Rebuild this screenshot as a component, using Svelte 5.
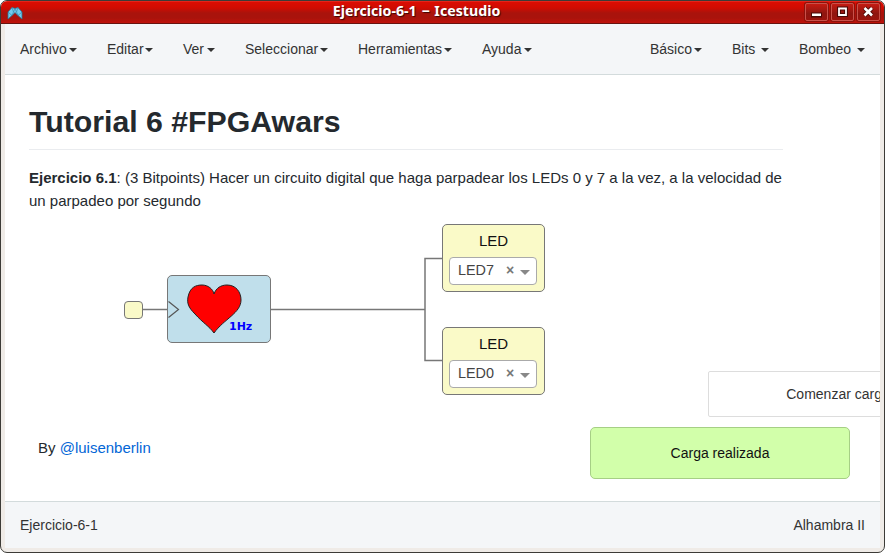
<script>
  const menus = [
    { label: 'Archivo', width: 57 },
    { label: 'Editar', width: 46 },
    { label: 'Ver', width: 32 },
    { label: 'Seleccionar', width: 83 },
    { label: 'Herramientas', width: 94 },
    { label: 'Ayuda', width: 50 }
  ];
  const collections = [
    { label: 'Básico', width: 52 },
    { label: 'Bits', width: 37 },
    { label: 'Bombeo', width: 66 }
  ];
  const leds = [
    { pin: 'LED7', top: 149 },
    { pin: 'LED0', top: 252 }
  ];
</script>

<div class="window">
  <header class="titlebar">
    <svg class="logo" width="16" height="14" viewBox="0 0 16 14">
      <path d="M1 6 5 1.5 8 2.5 11 1.5 15 6v7L11 9.5 8 6.5 5 9.5 1 13z" fill="#72cbed" stroke="#287694" stroke-width=".8" />
      <path d="M1 6l4 3.5L8 2.5l3 7L15 6M5 1.5 6.5 6M11 1.5 9.500 6" fill="none" stroke="#368cae" stroke-width=".7" />
    </svg>
    <h1>Ejercicio-6-1 − Icestudio</h1>
    <div class="controls">
      <button aria-label="Minimizar"><svg width="21" height="16"><path class="edge" d="M5 8.500h11v5H5z" /><path d="M6 9.500h9v2.500H6z" fill="#fff" /></svg></button>
      <button aria-label="Maximizar"><svg width="21" height="16"><path d="M7 4.500h7v6.500H7z" fill="none" stroke="#4c0907" stroke-width="4" /><path d="M7 4.500h7v6.500H7z" fill="none" stroke="#fff" stroke-width="1.8" /></svg></button>
      <button aria-label="Cerrar"><svg width="21" height="16"><path d="m6.500 4 7.500 7.500m0-7.500-7.500 7.500" stroke="#4c0907" stroke-width="4.500" /><path d="m6.500 4 7.500 7.500m0-7.500-7.500 7.500" stroke="#fff" stroke-width="2.600" /></svg></button>
    </div>
  </header>
  <div class="body">
    <nav>
      <div class="group">
        {#each menus as item}
          <span class="menu" style:width="{item.width}px">{item.label}<i class="caret"></i></span>
        {/each}
      </div>
      <div class="group">
        {#each collections as item}
          <span class="menu" style:width="{item.width}px">{item.label}<i class="caret"></i></span>
        {/each}
      </div>
    </nav>
    <main>
      <section class="intro">
        <h2>Tutorial 6 #FPGAwars</h2>
        <p><b>Ejercicio 6.1</b>: (3 Bitpoints) Hacer un circuito digital que haga parpadear los LEDs 0 y 7 a la vez, a la velocidad de<br />un parpadeo por segundo</p>
      </section>
      <svg class="wires" width="875" height="426">
        <path d="M137 234.500h27M265 234.500h155M438 183.500h-18v102h18" fill="none" stroke="#777" stroke-width="1.500" />
      </svg>
      <div class="port"></div>
      <div class="heart">
        <svg width="104" height="69" viewBox="0 0 104 69">
          <path d="m1.500 26.500 10 8-10 8" fill="none" stroke="#555" stroke-width="1.200" />
          <path d="M47 58C42 51 36 48 28 39C21 32 20 28 21 22C23 12 29 10 35 10C41 10 46 14 47 19C49 13 54 10 60 10C69 10 74 17 74 25C74 38 57 44 47 58Z" fill="#f00" stroke="#222" stroke-width="1" />
        </svg>
        <b>1Hz</b>
      </div>
      {#each leds as led}
        <div class="led" style:top="{led.top}px">
          <span>LED</span>
          <div class="select">
            <span>{led.pin}</span><b>×</b><i></i>
          </div>
        </div>
      {/each}
      <p class="author">By <a href="#author">@luisenberlin</a></p>
      <div class="toast pending">Comenzar carga</div>
      <div class="toast done">Carga realizada</div>
    </main>
    <footer><span>Ejercicio-6-1</span><span>Alhambra II</span></footer>
  </div>
</div>

<style>
  :global(body) { margin: 0; background: #fff; overflow: hidden; }
  * { box-sizing: border-box; }
  .window {
    width: 885px; height: 553px; overflow: hidden;
    display: flex; flex-direction: column;
    border: 1px solid #3c3b37; border-radius: 7px;
    background: #efebe7; color: #333;
    font: 14px/20px "Liberation Sans", Arial, sans-serif;
  }
  .titlebar {
    height: 23px; flex: none; display: flex; align-items: flex-start;
    border-bottom: 1px solid #671410;
    background: linear-gradient(#f03a30 0, #db0d02 1px, #cf0c02 7px, #a9130c 12px, #a9130c 17px, #c0120a 22px);
  }
  .logo { margin: 5px 0 0 6px; width: 16px; }
  h1 {
    flex: 1; margin: 0 0 0 5px; padding-right: 0; text-align: center; color: #fff;
    font: bold 14.2px/20px "Noto Sans", sans-serif; word-spacing: 1px;
    text-shadow: 1px 1px 1px #3b0503;
  }
  .controls { display: flex; gap: 3px; padding: 2px 4px 0 0; }
  button {
    width: 23px; height: 18px; padding: 0; border: 1px solid #c9524a; border-radius: 2px;
    background: linear-gradient(#c51b12, #8e1610 60%, #9c120c); box-shadow: 0 0 0 1px #8c120c;
  }
  button svg { display: block; }
  .edge { fill: #4c0907; }
  .body { width: 875px; height: 524px; margin-left: 4px; overflow: hidden; background: #fff; }
  nav {
    height: 51px; padding: 0 15px; display: flex; justify-content: space-between; align-items: center;
    background: #f4f6f8; border-bottom: 1px solid #d3dbdc;
  }
  .group { display: flex; gap: 30px; }
  .menu { display: flex; justify-content: space-between; align-items: center; white-space: nowrap; }
  .caret { border: 4px solid transparent; border-top-color: #333; border-bottom: 0; margin-top: 1px; }
  main { height: 426px; position: relative; overflow: hidden; }
  .intro { width: 754px; margin-left: 24px; padding-top: 27px; color: #24292e; }
  h2 { margin: 0; height: 48px; font-size: 30.25px; line-height: 39px; border-bottom: 1px solid #eaecef; }
  .intro p { margin: 16px 0 0; font-size: 15px; line-height: 23px; white-space: nowrap; }
  .wires { position: absolute; left: 0; top: 0; }
  .port, .heart, .led { position: absolute; border: 1px solid #777; border-radius: 5px; background: #fafac8; }
  .port { left: 119px; top: 226px; width: 19px; height: 18px; border-radius: 4px; }
  .heart { left: 162px; top: 200px; width: 104px; height: 68px; background: #c0dfeb; }
  .heart svg { position: absolute; left: -1px; top: -1px; }
  .heart b { position: absolute; left: 61px; top: 44px; color: #00f; font: bold 11px/14px "DejaVu Sans", sans-serif; }
  .led { left: 437px; width: 103px; height: 68px; padding-top: 7px; color: #111; text-align: center; font-size: 15px; line-height: 18px; }
  .select {
    display: flex; align-items: center; width: 88px; height: 28px; margin: 7px 0 0 6px; padding: 0 6px 0 8px;
    background: #fff; border: 1px solid #aaa; border-radius: 4px; color: #444; text-align: left; font-size: 14.4px;
  }
  .select span { flex: 1; margin-top: -2px; }
  .select b { width: 10px; color: #777; font-size: 14px; margin: -2px 4px 0 0; }
  .select i { border: 5px solid transparent; border-top-color: #888; border-bottom: 0; margin-top: 3px; }
  .author { position: absolute; left: 33px; top: 363px; margin: 0; font-size: 15px; line-height: 20px; color: #24292e; }
  a { color: #0366d6; text-decoration: none; }
  .toast { position: absolute; width: 260px; text-align: center; white-space: nowrap; }
  .pending { left: 703px; top: 296px; height: 46px; line-height: 44px; border: 1px solid #ddd; border-radius: 2px; background: #fff; }
  .done { left: 585px; top: 352px; height: 52px; line-height: 50px; color: #111; background: #d2ffaa; border: 1px solid #a6cf85; border-radius: 5px; }
  footer {
    height: 47px; padding: 0 15px; display: flex; align-items: center; justify-content: space-between;
    background: #f4f6f8; border-top: 1px solid #d3dbdc;
  }
</style>
